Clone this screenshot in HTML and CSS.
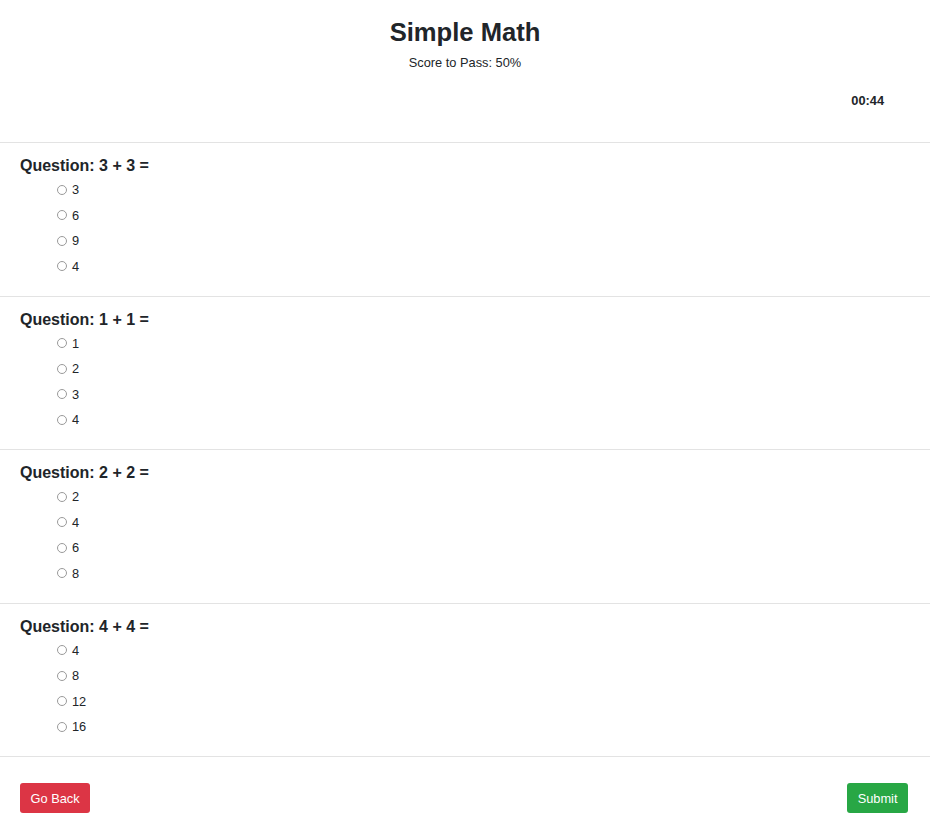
FILE: index.html
```html
<!DOCTYPE html>
<html lang="en">
<head>
<meta charset="utf-8">
<title>Simple Math</title>
<link rel="stylesheet" href="styles.css">
</head>
<body>
<header class="quiz-header">
  <h1 class="quiz-title">Simple Math</h1>
  <p class="quiz-pass">Score to Pass: 50%</p>
  <div class="quiz-timer">00:44</div>
</header>
<main class="quiz">
  <section class="question">
    <h3 class="question-title">Question: 3 + 3 =</h3>
    <label class="option"><input type="radio" name="q1"><span>3</span></label>
    <label class="option"><input type="radio" name="q1"><span>6</span></label>
    <label class="option"><input type="radio" name="q1"><span>9</span></label>
    <label class="option"><input type="radio" name="q1"><span>4</span></label>
  </section>
  <section class="question">
    <h3 class="question-title">Question: 1 + 1 =</h3>
    <label class="option"><input type="radio" name="q2"><span>1</span></label>
    <label class="option"><input type="radio" name="q2"><span>2</span></label>
    <label class="option"><input type="radio" name="q2"><span>3</span></label>
    <label class="option"><input type="radio" name="q2"><span>4</span></label>
  </section>
  <section class="question">
    <h3 class="question-title">Question: 2 + 2 =</h3>
    <label class="option"><input type="radio" name="q3"><span>2</span></label>
    <label class="option"><input type="radio" name="q3"><span>4</span></label>
    <label class="option"><input type="radio" name="q3"><span>6</span></label>
    <label class="option"><input type="radio" name="q3"><span>8</span></label>
  </section>
  <section class="question">
    <h3 class="question-title">Question: 4 + 4 =</h3>
    <label class="option"><input type="radio" name="q4"><span>4</span></label>
    <label class="option"><input type="radio" name="q4"><span>8</span></label>
    <label class="option"><input type="radio" name="q4"><span>12</span></label>
    <label class="option"><input type="radio" name="q4"><span>16</span></label>
  </section>
</main>
<footer class="quiz-footer">
  <button class="btn btn-back" type="button">Go Back</button>
  <button class="btn btn-submit" type="button">Submit</button>
</footer>
</body>
</html>
```
FILE: styles.css
```css
* { box-sizing: border-box; }
body {
  margin: 0;
  font-family: "Liberation Sans", Arial, sans-serif;
  color: #212529;
  background: #fff;
}
.quiz-header {
  text-align: center;
  padding: 17px 0 0;
}
.quiz-title {
  margin: 0;
  font-size: 25.6px;
  line-height: 30px;
  font-weight: bold;
}
.quiz-pass {
  margin: 6px 0 0;
  font-size: 12.8px;
  line-height: 19px;
}
.quiz-timer {
  text-align: right;
  padding-right: 46px;
  margin-top: 19px;
  font-size: 12.8px;
  line-height: 19px;
  font-weight: bold;
  height: 51px;
}
.question {
  border-top: 1px solid #e3e3e3;
  padding: 13px 20px 16px;
  height: 153.5px;
}
.question-title {
  margin: 0 0 2px;
  font-size: 16px;
  line-height: 19px;
  font-weight: bold;
}
.option {
  display: flex;
  align-items: center;
  height: 25.5px;
  padding-left: 37px;
  font-size: 12.8px;
}
.option input {
  appearance: none;
  -webkit-appearance: none;
  width: 10px;
  height: 10px;
  margin: 0 5px 0 0;
  border: 1px solid #9a9a9a;
  border-radius: 50%;
  background: #fff;
}
.quiz-footer {
  border-top: 1px solid #e3e3e3;
  display: flex;
  justify-content: space-between;
  padding: 26px 22px 10px 20px;
}
.btn {
  height: 30px;
  padding: 0 10.5px;
  border: none;
  border-radius: 3px;
  color: #fff;
  font-family: "Liberation Sans", Arial, sans-serif;
  font-size: 12.8px;
}
.btn-back { background: #dc3545; }
.btn-submit { background: #28a745; }
```
